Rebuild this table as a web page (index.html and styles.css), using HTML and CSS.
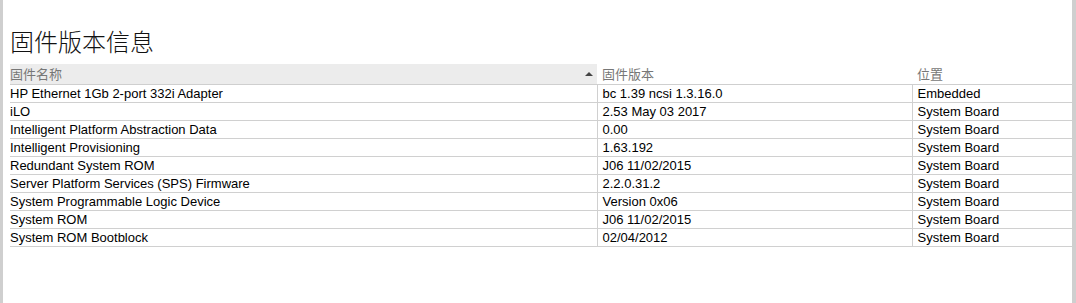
FILE: index.html
```html
<!DOCTYPE html>
<html lang="zh">
<head>
<meta charset="utf-8">
<title>固件版本信息</title>
<link rel="stylesheet" href="styles.css">
</head>
<body>
<div class="frame">
  <h1 class="title">固件版本信息</h1>
  <table class="fw">
    <thead>
      <tr>
        <th class="c1"><div class="sorthead"><span>固件名称</span><svg class="sort" width="8" height="5" viewBox="0 0 8 5"><polygon points="0,4 4,0 8,4" fill="#444"/></svg></div></th>
        <th class="c2">固件版本</th>
        <th class="c3">位置</th>
      </tr>
    </thead>
    <tbody>
      <tr><td class="c1">HP Ethernet 1Gb 2-port 332i Adapter</td><td class="c2">bc 1.39 ncsi 1.3.16.0</td><td class="c3">Embedded</td></tr>
      <tr><td class="c1">iLO</td><td class="c2">2.53 May 03 2017</td><td class="c3">System Board</td></tr>
      <tr><td class="c1">Intelligent Platform Abstraction Data</td><td class="c2">0.00</td><td class="c3">System Board</td></tr>
      <tr><td class="c1">Intelligent Provisioning</td><td class="c2">1.63.192</td><td class="c3">System Board</td></tr>
      <tr><td class="c1">Redundant System ROM</td><td class="c2">J06 11/02/2015</td><td class="c3">System Board</td></tr>
      <tr><td class="c1">Server Platform Services (SPS) Firmware</td><td class="c2">2.2.0.31.2</td><td class="c3">System Board</td></tr>
      <tr><td class="c1">System Programmable Logic Device</td><td class="c2">Version 0x06</td><td class="c3">System Board</td></tr>
      <tr><td class="c1">System ROM</td><td class="c2">J06 11/02/2015</td><td class="c3">System Board</td></tr>
      <tr><td class="c1">System ROM Bootblock</td><td class="c2">02/04/2012</td><td class="c3">System Board</td></tr>
    </tbody>
  </table>
</div>
</body>
</html>
```

FILE: styles.css
```css
html, body {
  margin: 0;
  padding: 0;
  height: 100%;
  background: #fff;
}
.frame {
  box-sizing: border-box;
  height: 303px;
  border-left: 3px solid #cfcfcf;
  border-right: 4px solid #cfcfcf;
  padding: 29px 0 0 7px;
  font-family: "Liberation Sans", "Noto Sans CJK SC", sans-serif;
}
.title {
  margin: 0 0 11px 0;
  height: 24px;
  line-height: 24px;
  font-size: 24px;
  font-weight: 300;
  color: #111;
  font-family: "Noto Sans CJK SC", sans-serif;
}
.fw {
  width: 1062px;
  border-collapse: collapse;
  table-layout: fixed;
  font-size: 13px;
}
.fw th, .fw td {
  padding: 0 0 0 5px;
  text-align: left;
  white-space: nowrap;
  overflow: hidden;
}
.fw th {
  height: 20px;
  font-weight: normal;
  color: #777;
  font-family: "Noto Sans CJK SC", sans-serif;
  font-size: 13px;
  line-height: 20px;
  border-bottom: 1px solid #cfcfcf;
  vertical-align: bottom;
}
.fw th.c1 {
  background: #ececec;
}
.fw td {
  height: 17px;
  line-height: 17px;
  color: #000;
  border-bottom: 1px solid #d0d0d0;
}
.fw .c1 { width: 587px; padding-left: 0; }
.fw .c2 { width: 310px; }
.fw td.c2, .fw td.c3 { border-left: 1px solid #d0d0d0; }
.sorthead {
  display: flex;
  align-items: center;
  justify-content: space-between;
  padding-right: 4px;
}
.sort { display: block; }
```
